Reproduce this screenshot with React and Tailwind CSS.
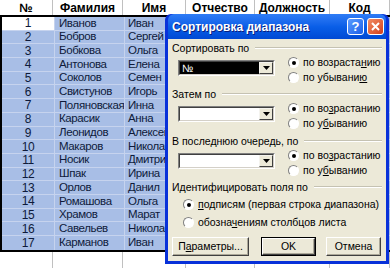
import React from 'react'

const rows = [
  ['1', 'Иванов', 'Иван'],
  ['2', 'Бобров', 'Сергей'],
  ['3', 'Бобкова', 'Ольга'],
  ['4', 'Антонова', 'Елена'],
  ['5', 'Соколов', 'Семен'],
  ['6', 'Свистунов', 'Игорь'],
  ['7', 'Поляновская', 'Инна'],
  ['8', 'Карасик', 'Анна'],
  ['9', 'Леонидов', 'Алексей'],
  ['10', 'Макаров', 'Николай'],
  ['11', 'Носик', 'Дмитрий'],
  ['12', 'Шпак', 'Ирина'],
  ['13', 'Орлов', 'Данил'],
  ['14', 'Ромашова', 'Ольга'],
  ['15', 'Храмов', 'Марат'],
  ['16', 'Савельев', 'Николай'],
  ['17', 'Карманов', 'Иван'],
]

const cols = 'grid grid-cols-[53px_70px_63px_69px_75px_60px]'
const raised = 'border border-t-white border-l-white border-b-[#404040] border-r-[#404040] shadow-[inset_-1px_-1px_0_#aca899]'

function Combo({ value, selected }) {
  return (
    <div className="flex h-[16px] w-[97px] border border-t-[#808080] border-l-[#808080] border-b-white border-r-white">
      <div className="flex flex-1 border border-t-[#404040] border-l-[#404040] border-b-[#d4d0c8] border-r-[#d4d0c8] bg-white">
        <div className={'flex-1 px-[2px] text-[10.5px] leading-[12px] ' + (selected ? 'bg-black text-white' : '')}>{value}</div>
        <div className="flex w-[14px] items-center justify-center border border-t-[#f4f3ee] border-l-[#f4f3ee] border-b-[#404040] border-r-[#404040] bg-[#ece9d8]">
          <svg width="7" height="4" viewBox="0 0 7 4"><path d="M0 0h7L3.5 4z" fill="#000" /></svg>
        </div>
      </div>
    </div>
  )
}

function Radio({ checked, children }) {
  return (
    <div className="flex h-[15px] items-center gap-[4px] whitespace-nowrap">
      <div className="relative h-[11px] w-[11px] shrink-0 rounded-full border border-t-[#808080] border-l-[#808080] border-b-white border-r-white bg-white">
        {checked && <div className="absolute left-[3px] top-[3px] h-[4px] w-[4px] rounded-full bg-black" />}
      </div>
      <span className="text-[10.5px] leading-none">{children}</span>
    </div>
  )
}

function Label({ title }) {
  return (
    <div className="flex h-[14px] items-center gap-[6px]">
      <span className="whitespace-nowrap text-[10.5px] leading-none">{title}</span>
      <div className="flex-1 border-t border-b border-t-[#c5c2b2] border-b-white" />
    </div>
  )
}

function SortGroup({ title, value, selected, h, up, down }) {
  return (
    <div className={h}>
      <Label title={title} />
      <div className="flex items-start pl-[6px]">
        <div className="pt-[5px]"><Combo value={value} selected={selected} /></div>
        <div className="ml-[13px] flex flex-col">
          <Radio checked>{up}</Radio>
          <Radio>{down}</Radio>
        </div>
      </div>
    </div>
  )
}

export default function App() {
  return (
    <div className="relative h-[268px] w-[390px] overflow-hidden bg-white font-['Liberation_Sans',Arial,sans-serif] text-black">
      <div className={cols + ' h-[15px] text-[12px] font-bold'}>
        {['№', 'Фамилия', 'Имя', 'Отчество', 'Должность', 'Код'].map(h => (
          <div key={h} className="flex items-center justify-center border-r border-[#c0c0c0] leading-none">{h}</div>
        ))}
      </div>
      <div className="w-[400px] border-2 border-black bg-[#a8bee6] text-[11.5px] tracking-[-0.4px] text-[#0e1a3a]">
        {rows.map((r, i) => (
          <div key={i} className={cols + ' h-[13.7px] border-b border-[#c6d3ee] last:border-b-0'}>
            <div className={'flex items-center justify-center border-r border-[#c6d3ee] text-[12px] leading-none ' + (i === 0 ? 'bg-white' : '')}>{r[0]}</div>
            <div className="flex items-center overflow-hidden whitespace-nowrap border-r border-[#c6d3ee] pl-[4px] leading-none">{r[1]}</div>
            <div className="flex items-center overflow-hidden whitespace-nowrap border-r border-[#c6d3ee] pl-[3px] leading-none">{r[2]}</div>
            <div className="border-r border-[#c6d3ee]" />
            <div className="border-r border-[#c6d3ee]" />
            <div />
          </div>
        ))}
      </div>
      <div className={cols + ' h-[16px]'}>
        {[0, 1, 2, 3, 4, 5].map(c => <div key={c} className="border-r border-[#c0c0c0]" />)}
      </div>

      <div className="absolute left-[165px] top-[14px] flex h-[250px] w-[224px] flex-col rounded-t-[6px] bg-[#0831d9] px-[3px] pb-[3px] font-['Liberation_Sans',Tahoma,sans-serif]">
        <div className="flex h-[25px] items-center rounded-t-[6px] bg-gradient-to-b from-[#2f7cf5] via-[#0a5fe8] to-[#0049d4] pl-[4px] pr-[2px]">
          <span className="flex-1 text-[12px] font-bold text-white [text-shadow:1px_1px_0_#0a1e7c]">Сортировка диапазона</span>
          <div className="flex gap-[3px]">
            <div className="flex h-[17px] w-[17px] items-center justify-center rounded-[3px] border border-white bg-gradient-to-br from-[#5b9bff] to-[#1a5ee8] text-[13px] font-bold leading-none text-white">?</div>
            <div className="flex h-[17px] w-[17px] items-center justify-center rounded-[3px] border border-white bg-gradient-to-br from-[#f08c64] to-[#d53c14]">
              <svg width="9" height="9" viewBox="0 0 9 9"><path d="M1 1l7 7M8 1L1 8" stroke="#fff" strokeWidth="2" /></svg>
            </div>
          </div>
        </div>
        <div className="flex flex-1 flex-col bg-[#ece9d8] px-[4px] pt-[2px]">
          <SortGroup title="Сортировать по" value="№" selected h="h-[46px]"
            up={<>по возраста<u>н</u>ию</>} down={<>по убывани<u>ю</u></>} />
          <SortGroup title="Затем по" value="" h="h-[47px]"
            up={<>по во<u>з</u>растанию</>} down={<>по у<u>б</u>ыванию</>} />
          <SortGroup title="В последнюю очередь, по" value="" h="h-[46px]"
            up={<>по во<u>з</u>растанию</>} down={<>по у<u>б</u>ыванию</>} />
          <div className="h-[57px]">
            <Label title="Идентифицировать поля по" />
            <div className="flex flex-col gap-[3px] pl-[11px] pt-[3px]">
              <Radio checked><u>п</u>одписям (первая строка диапазона)</Radio>
              <Radio>обозна<u>ч</u>ениям столбцов листа</Radio>
            </div>
          </div>
          <div className="flex items-center">
            <div className={'flex h-[19px] w-[77px] items-center justify-center text-[10.5px] ' + raised}><span>П<u>а</u>раметры...</span></div>
            <div className="ml-[12px] flex h-[19px] w-[55px] border border-black">
              <div className={'flex flex-1 items-center justify-center text-[10.5px] ' + raised}>OK</div>
            </div>
            <div className={'ml-[10px] flex h-[19px] w-[55px] items-center justify-center text-[10.5px] ' + raised}>Отмена</div>
          </div>
        </div>
      </div>
    </div>
  )
}
